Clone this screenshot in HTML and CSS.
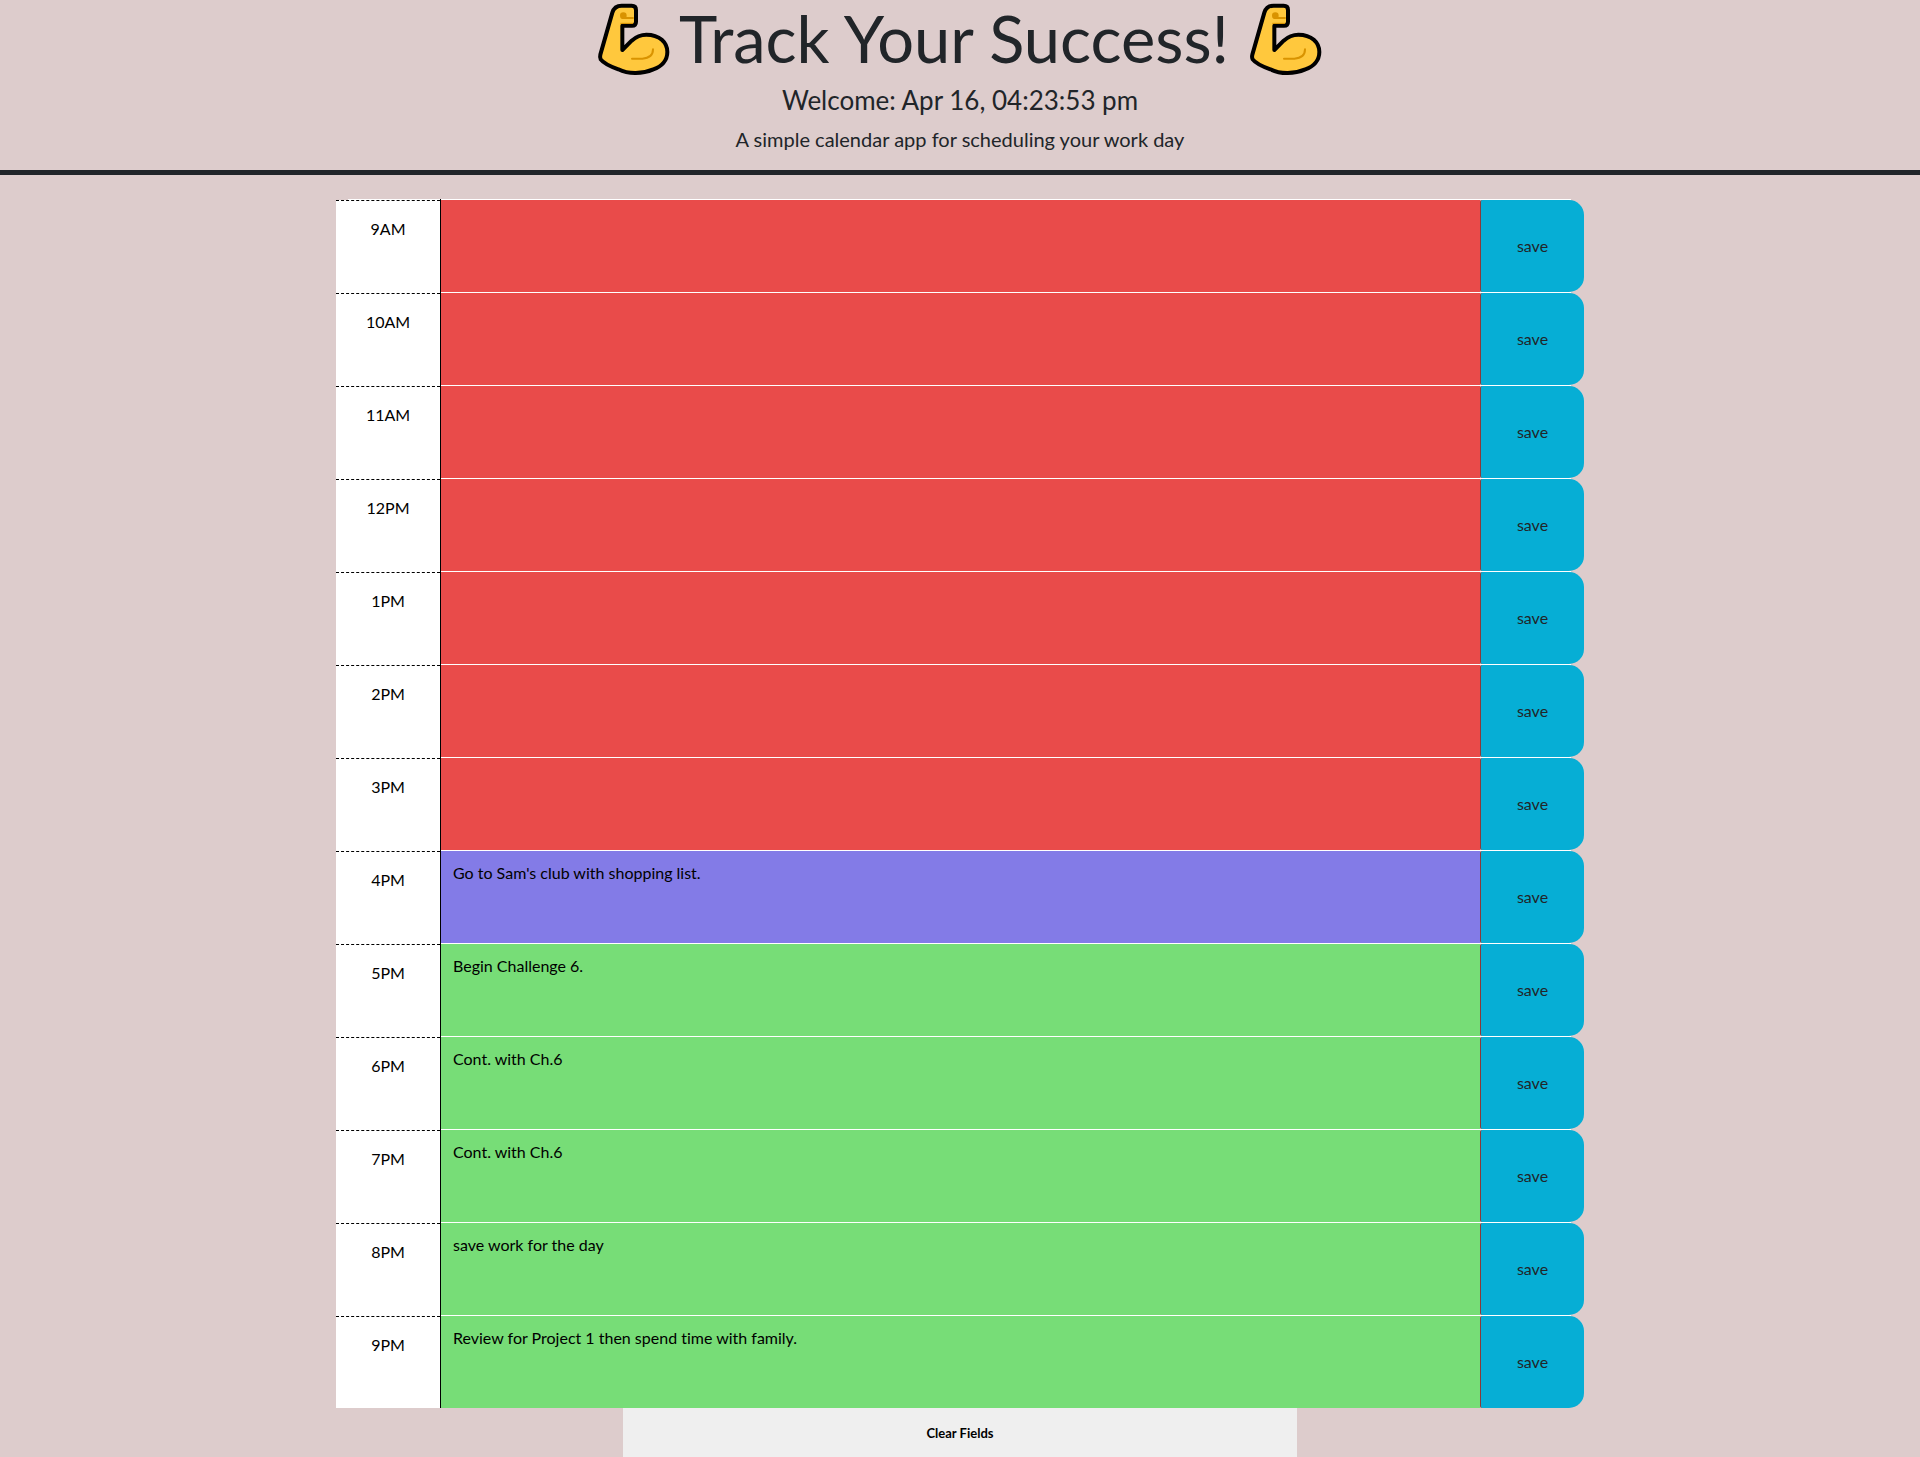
FILE: index.html
```
<!DOCTYPE html>
<html lang="en">
<head>
  <meta charset="utf-8">
  <meta name="viewport" content="width=device-width, initial-scale=1">
  <title>Work Day Scheduler</title>
  <link rel="stylesheet" href="styles.css">
</head>
<body>
  <svg class="sprite" aria-hidden="true">
    <symbol id="arm" viewBox="24 6 222 225">
      <path d="M70 38Q76 17 98 17H128Q141 17 141 30V65Q141 77 129 77H100V150L128 122Q148 104 172 104C212 104 235 128 235 156C235 182 217 200 193 208C160 222 120 224 88 208C66 200 44 190 35 178Q32 172 34 164Z" fill="#ffc83d" stroke="#000" stroke-width="12" stroke-linejoin="round"/>
      <circle cx="103" cy="47" r="10" fill="#d99300"/>
      <path d="M103 54H134" stroke="#d99300" stroke-width="6"/>
      <path d="M94 70H132" stroke="#d99300" stroke-width="3"/>
      <path d="M129 176H160Q192 174 192 148" fill="none" stroke="#d99300" stroke-width="6" stroke-linecap="round"/>
    </symbol>
  </svg>

  <header class="masthead">
    <h1 class="title">
      <svg class="arm" role="img" aria-label="Flexed arm"><use href="#arm"/></svg>
      <span>Track Your Success!</span>
      <svg class="arm arm-end" role="img" aria-label="Flexed arm"><use href="#arm"/></svg>
    </h1>
    <h3 class="clock">Welcome: Apr 16, 04:23:53 pm</h3>
    <p class="lead">A simple calendar app for scheduling your work day</p>
  </header>

  <main class="planner">
    <div class="row"><label class="hour" for="h9">9AM</label><textarea class="entry past" id="h9"></textarea><button class="save" type="button">save</button></div>
    <div class="row"><label class="hour" for="h10">10AM</label><textarea class="entry past" id="h10"></textarea><button class="save" type="button">save</button></div>
    <div class="row"><label class="hour" for="h11">11AM</label><textarea class="entry past" id="h11"></textarea><button class="save" type="button">save</button></div>
    <div class="row"><label class="hour" for="h12">12PM</label><textarea class="entry past" id="h12"></textarea><button class="save" type="button">save</button></div>
    <div class="row"><label class="hour" for="h13">1PM</label><textarea class="entry past" id="h13"></textarea><button class="save" type="button">save</button></div>
    <div class="row"><label class="hour" for="h14">2PM</label><textarea class="entry past" id="h14"></textarea><button class="save" type="button">save</button></div>
    <div class="row"><label class="hour" for="h15">3PM</label><textarea class="entry past" id="h15"></textarea><button class="save" type="button">save</button></div>
    <div class="row"><label class="hour" for="h16">4PM</label><textarea class="entry present" id="h16">Go to Sam's club with shopping list.</textarea><button class="save" type="button">save</button></div>
    <div class="row"><label class="hour" for="h17">5PM</label><textarea class="entry future" id="h17">Begin Challenge 6.</textarea><button class="save" type="button">save</button></div>
    <div class="row"><label class="hour" for="h18">6PM</label><textarea class="entry future" id="h18">Cont. with Ch.6</textarea><button class="save" type="button">save</button></div>
    <div class="row"><label class="hour" for="h19">7PM</label><textarea class="entry future" id="h19">Cont. with Ch.6</textarea><button class="save" type="button">save</button></div>
    <div class="row"><label class="hour" for="h20">8PM</label><textarea class="entry future" id="h20">save work for the day</textarea><button class="save" type="button">save</button></div>
    <div class="row"><label class="hour" for="h21">9PM</label><textarea class="entry future" id="h21">Review for Project 1 then spend time with family.</textarea><button class="save" type="button">save</button></div>
    <button class="clear" type="button">Clear Fields</button>
  </main>
</body>
</html>
```
FILE: styles.css
```
* {
  box-sizing: border-box;
}

body {
  margin: 0;
  background: #ddcccc;
  color: #212529;
  font-family: Lato, "Open Sans", sans-serif;
  font-size: 16px;
  line-height: 24px;
  font-variant-ligatures: none;
}

.sprite {
  position: absolute;
  width: 0;
  height: 0;
}

.masthead {
  padding-bottom: 16px;
  margin-bottom: 24px;
  border-bottom: 5px solid #212529;
  text-align: center;
}

.title {
  display: flex;
  justify-content: center;
  align-items: flex-start;
  gap: 8px;
  height: 76px;
  margin: 0 0 8px;
  font-size: 65px;
  font-weight: 400;
  line-height: 76px;
}

.arm {
  width: 74px;
  height: 75px;
  margin-top: 2px;
}

.arm-end {
  margin-left: 12px;
}

.clock {
  margin: 0 0 8px;
  font-size: 26px;
  font-weight: 400;
  line-height: 32px;
}

.lead {
  margin: 0;
  font-size: 20px;
  line-height: 30px;
}

.planner {
  width: 65%;
  margin: 0 auto;
}

.row {
  display: grid;
  grid-template-columns: 1fr 10fr 1fr;
  min-height: 93px;
  background: linear-gradient(#fff, #fff) center top / 98% 1px no-repeat;
}

.hour {
  margin: 1px 0 -1px;
  padding-top: 16px;
  border-top: 1px dashed #000;
  background: #fff;
  color: #000;
  text-align: center;
}

.row:nth-of-type(13) .hour {
  margin-bottom: 0;
}

.entry {
  width: 100%;
  margin: 0;
  padding: 11px 12px;
  border: 0 solid #000;
  border-left-width: 1px;
  border-radius: 0;
  box-shadow: inset 0 1px #fff;
  color: #000;
  font: inherit;
  font-variant-ligatures: none;
  resize: none;
  outline: 0;
}

.past {
  background: #e94b4a;
}

.present {
  background: #837be7;
}

.future {
  background: #77dd77;
}

.save {
  margin: 1px 0 0;
  padding: 0;
  border: 0;
  border-left: 1px solid #8a3a3a;
  border-radius: 2px 15px 15px 2px;
  background: #06aed5;
  color: #212529;
  font: inherit;
  cursor: pointer;
}

.clear {
  display: block;
  width: 54%;
  height: 49px;
  margin: 0 auto;
  padding: 0;
  border: 0;
  background: #efefef;
  color: #000;
  font-family: inherit;
  font-size: 13px;
  font-weight: 700;
  cursor: pointer;
}
```
